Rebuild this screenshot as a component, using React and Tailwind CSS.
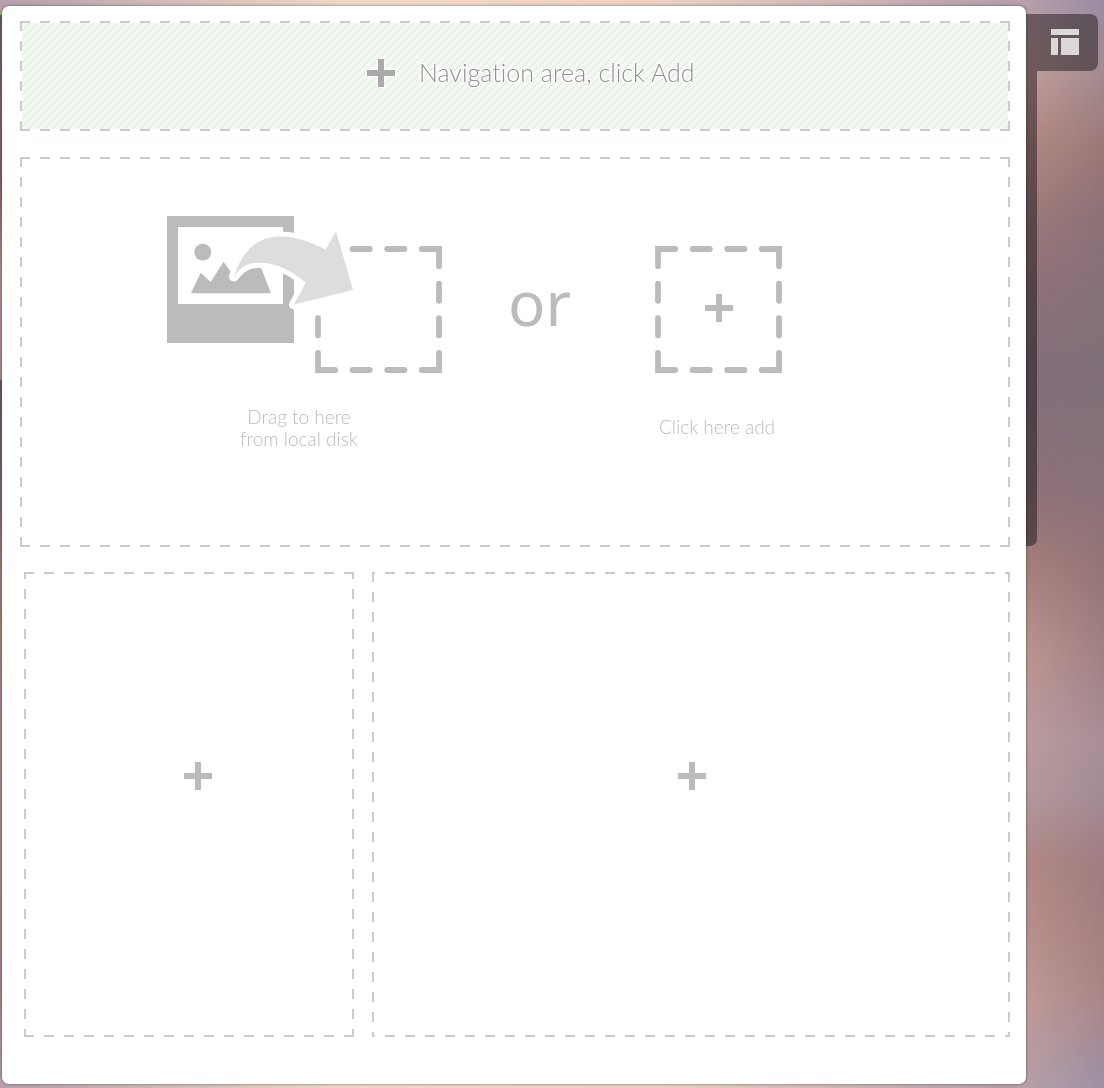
const frame =
  "bg-[linear-gradient(90deg,#cbcbcb_50%,transparent_50%),linear-gradient(90deg,#cbcbcb_50%,transparent_50%),linear-gradient(180deg,#cbcbcb_50%,transparent_50%),linear-gradient(180deg,#cbcbcb_50%,transparent_50%)] [background-size:20px_2px,20px_2px,2px_20px,2px_20px] [background-repeat:repeat-x,repeat-x,repeat-y,repeat-y]";

function Plus({ className = "" }) {
  return (
    <svg width="28" height="28" viewBox="0 0 28 28" className={className} shapeRendering="crispEdges">
      <path d="M11 0h6v11h11v6H17v11h-6V17H0v-6h11z" fill="currentColor" />
    </svg>
  );
}

function DropBox({ partial = false }) {
  return (
    <g fill="none" stroke="#bbb" strokeWidth="5.8" strokeLinecap="round" strokeLinejoin="miter">
      {!partial && <path d="M20.2 3H3v17.2M3 37.6v17.2" />}
      <path d="M37.6 3h17.2M72.2 3h17.2M106.8 3H124v17.2M124 37.6v17.2M124 72.2v17.2M124 106.8V124h-17.2M89.4 124H72.2M54.8 124H37.6M20.2 124H3v-17.2M3 89.4V72.2" />
    </g>
  );
}

function DragPicture() {
  return (
    <svg width="276" height="160" viewBox="167 215 276 160">
      <path d="M167 216h127v127H167z" fill="#bbb" />
      <path d="M178 227h105v77H178z" fill="#fff" />
      <circle cx="202.8" cy="252.2" r="8.4" fill="#bbb" />
      <path d="M190.8 293.3 200.8 272.8 210.7 282 223.5 261.8 236 279 250 266 261 267.5 271 293.3z" fill="#bbb" />
      <g transform="translate(315 246)">
        <DropBox partial />
      </g>
      <path
        d="M234 276.5C242 252 256 237 280 236.5C297 236.500 313 243 325.500 249.500L336 231.500L353 290L294 304.500L305.800 282.500C290 269 274 262.500 259 262.700C246 263 240 268.500 234 276.500z"
        fill="#ddd"
        stroke="#fff"
        strokeWidth="10"
        strokeLinejoin="round"
        paintOrder="stroke"
      />
    </svg>
  );
}

function LayoutIcon() {
  return (
    <svg width="28" height="26" viewBox="0 0 28 26" fill="#dcd7d9" shapeRendering="crispEdges">
      <path d="M0 0h28v6H0zM0 9h7v17H0zM10 9h18v17H10z" />
    </svg>
  );
}

export default function App() {
  return (
    <div className="relative flex h-[1088px] w-[1104px] overflow-hidden bg-[linear-gradient(90deg,#b5a0aa_0,#f2d8c8_350px,#edd2c4_650px,#b79fab_1000px,transparent_1020px),linear-gradient(180deg,#b79fab_0,#c29e98_75px,#b38b86_135px,#9d7a79_220px,#8d7079_290px,#846d7c_380px,#8d7178_490px,#a47d7a_560px,#ba9491_650px,#bb9c9d_740px,#b39799_800px,#b08a86_860px,#b78f8a_920px,#bf9a97_1000px,#b6a0a8_1088px)] font-['Lato',sans-serif] text-[#bbb]">
      <div className="absolute top-0 right-0 h-full w-[78px] bg-[linear-gradient(180deg,#988aa2_0,#a28a90_75px,#9c7775_150px,#8b7078_220px,#7f7079_380px,#8a7178_490px,#957578_570px,#a07f82_650px,#a88e98_740px,#a38c97_790px,#a07a7e_870px,#a67f80_940px,#a98688_1000px,#9c90a6_1088px)] [mask-image:linear-gradient(90deg,transparent,black)]" />
      <div className="mt-[13px] h-[1064px] w-[2px] shrink-0 bg-[linear-gradient(180deg,#8fc63a_0_2px,#6d5a6c_2px,#80616a_90px,#8a6260_170px,#b38b86_260px,#b0868a_366px,#6b5568_368px,#80656f_490px,#a17975_550px,#a87d79_630px,#ab8888_750px,#a98280_970px,#b49ca5_1064px)]" />
      <main className="relative z-10 mt-[6px] h-[1078px] w-[1024px] shrink-0 rounded-[7px] bg-white pt-[15px] pl-[18px] shadow-[0_0_3px_rgba(0,0,0,0.5)]">
        <header className={`${frame} h-[110px] w-[990px] p-[2px] [background-position:0_0,0_100%,0_0,100%_0]`}>
          <div className="flex h-[106px] w-[986px] items-center bg-[#f4f8f3] bg-[linear-gradient(135deg,transparent_46%,#dee5dd_46%_54%,transparent_54%)] bg-[length:8px_8px] pb-[7px] pl-[345px]">
            <Plus className="text-[#aaa] [filter:drop-shadow(0_0_1px_white)_drop-shadow(0_0_1px_white)]" />
            <span className="ml-6 text-[25px] leading-none font-light text-[#8f8f8f] will-change-transform [font-variant-ligatures:none] [text-shadow:0_0_2px_#fff,1px_1px_1px_#fff,-1px_-1px_1px_#fff,1px_-1px_1px_#fff,-1px_1px_1px_#fff]">Navigation area, click Add</span>
          </div>
        </header>

        <section className={`${frame} mt-[26px] flex h-[390px] w-[990px] pt-[58px] pl-[147px] [background-position:0_0,0_100%,0_0,100%_0]`}>
          <div className="w-[276px]">
            <DragPicture />
            <p className="mt-[31px] w-[264px] text-center text-[19px] leading-[22px] font-light will-change-transform">Drag to here<br />from local disk</p>
          </div>
          <div className="w-[212px] pt-[47px] pl-[65px] font-['Noto_Sans',sans-serif] text-[62px] leading-[80px]">or</div>
          <div className="pt-[31px]">
            <svg width="127" height="127" viewBox="0 0 127 127">
              <DropBox />
              <path d="M61 48h6v11h11v6H67v11h-6V65H50v-6h11z" fill="#bbb" shapeRendering="crispEdges" />
            </svg>
            <p className="mt-[43px] w-[124px] text-center text-[19px] leading-[22px] font-light whitespace-nowrap will-change-transform">Click here add</p>
          </div>
        </section>

        <div className="mt-[25px] ml-1 flex gap-[18px]">
          <section className={`${frame} flex h-[465px] w-[330px] pt-[190px] pl-[160px] [background-position:0_0,0_100%,0_-3px,100%_-3px]`}>
            <Plus />
          </section>
          <section className={`${frame} flex h-[465px] w-[638px] pt-[190px] pl-[306px] [background-position:-7px_0,-7px_100%,0_0,100%_0]`}>
            <Plus />
          </section>
        </div>
      </main>

      <aside className="relative pt-[14px]">
        <div className="flex h-[57px] w-[72px] items-center justify-center rounded-r-[8px] bg-[#0f0c0d]/45 pb-[2px] pl-[6px]">
          <LayoutIcon />
        </div>
        <div className="h-[475px] w-[11px] rounded-br-[7px] bg-[#0f0c0d]/45" />
      </aside>
    </div>
  );
}
